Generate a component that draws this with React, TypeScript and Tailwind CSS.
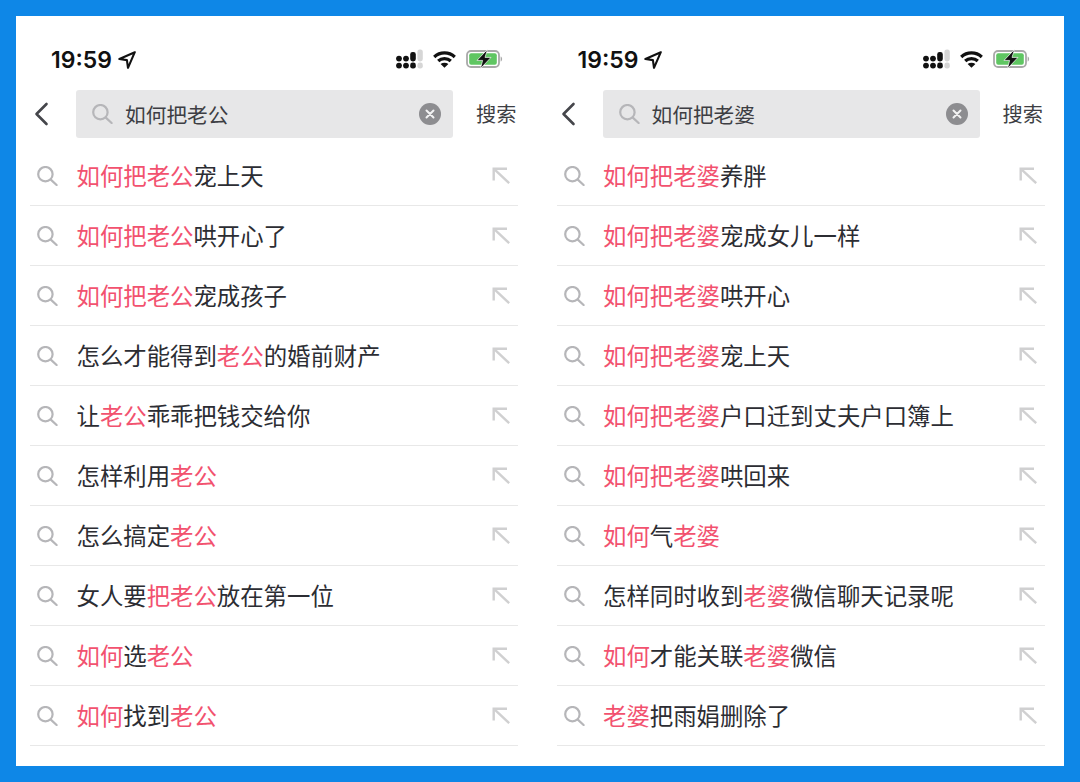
const cjk = "font-['Noto_Sans_CJK_SC','Noto_Sans_CJK_JP',sans-serif]";

type Seg = [string, boolean];
const R = (...parts: (string | [string])[]): Seg[] =>
  parts.map((p) => (typeof p === "string" ? [p, false] : [p[0], true]));

const left: Seg[][] = [
  R(["如何把老公"], "宠上天"),
  R(["如何把老公"], "哄开心了"),
  R(["如何把老公"], "宠成孩子"),
  R("怎么才能得到", ["老公"], "的婚前财产"),
  R("让", ["老公"], "乖乖把钱交给你"),
  R("怎样利用", ["老公"]),
  R("怎么搞定", ["老公"]),
  R("女人要", ["把老公"], "放在第一位"),
  R(["如何"], "选", ["老公"]),
  R(["如何"], "找到", ["老公"]),
];
const right: Seg[][] = [
  R(["如何把老婆"], "养胖"),
  R(["如何把老婆"], "宠成女儿一样"),
  R(["如何把老婆"], "哄开心"),
  R(["如何把老婆"], "宠上天"),
  R(["如何把老婆"], "户口迁到丈夫户口簿上"),
  R(["如何把老婆"], "哄回来"),
  R(["如何"], "气", ["老婆"]),
  R("怎样同时收到", ["老婆"], "微信聊天记录呢"),
  R(["如何"], "才能关联", ["老婆"], "微信"),
  R(["老婆"], "把雨娟删除了"),
];

function SearchIcon() {
  return (
    <svg width="21" height="20" viewBox="0 0 21 20" fill="none" stroke="#b6b6b9" strokeWidth="2.2" strokeLinecap="round">
      <circle cx="8.4" cy="8.2" r="7.2" />
      <path d="M13.8 13.6 L19.6 19" />
    </svg>
  );
}

function ArrowIcon() {
  return (
    <svg width="18" height="17" viewBox="0 0 18 17" fill="none" stroke="#d0d0d1" strokeWidth="2.4">
      <path d="M1.7 13.5 V1.7 H15" />
      <path d="M2.2 2.2 L17.2 16.2" />
    </svg>
  );
}

function StatusBar() {
  return (
    <div className="ml-[35px] flex h-[30px] w-[452px] items-center justify-between">
      <div className="flex items-center gap-[6px]">
        <span className="mt-[2px] font-['Inter',sans-serif] text-[23px] leading-[30px] font-semibold text-[#111]">19:59</span>
        <svg className="mt-[1px]" width="18" height="18" viewBox="0 0 18 18" fill="none" stroke="#111" strokeWidth="2.1" strokeLinejoin="round">
          <path d="M16.8 1.2 L1.4 8 L8.9 9.1 L10 16.8 Z" />
        </svg>
      </div>
      <div className="flex items-center gap-[10px]">
        <svg width="27" height="20" viewBox="0 0 27 20">
          <g fill="#111">
            <circle cx="3" cy="16.6" r="2.9" />
            <circle cx="3" cy="9.6" r="2.9" />
            <circle cx="10" cy="16.6" r="2.9" />
            <circle cx="10" cy="9.6" r="2.9" />
            <rect x="14.2" y="13.6" width="5.6" height="6" rx="2.4" />
            <rect x="14.2" y="3" width="5.6" height="9.4" rx="2.4" />
          </g>
          <rect x="21.4" y="13.6" width="5.4" height="6" rx="2.4" fill="#d6d6d6" />
          <rect x="21.4" y="0.4" width="5.4" height="12" rx="2.4" fill="#d6d6d6" />
        </svg>
        <svg width="23" height="17" viewBox="0 0 23 17" fill="none" stroke="#111" strokeWidth="3.2">
          <path d="M1.2 6 C7 0.6 16 0.6 21.8 6" />
          <path d="M5.2 10 C8.6 6.8 14.4 6.8 17.8 10" />
          <path d="M11.5 16.8 L7.6 13 C9.8 11.4 13.2 11.4 15.4 13 Z" fill="#111" stroke="none" />
        </svg>
        <svg width="37" height="20" viewBox="0 0 37 20">
          <rect x="1" y="2" width="32" height="16" rx="4" fill="none" stroke="#a9a9a9" strokeWidth="1.8" />
          <rect x="3.2" y="4.2" width="27.6" height="11.6" rx="2" fill="#5fc662" />
          <path d="M34.6 7.5 C36.6 8 36.6 12 34.6 12.5 Z" fill="#a9a9a9" />
          <path d="M21.5 0.4 L11 11.4 H16.6 L14.5 19.6 L25 8.4 H19 Z" fill="#111" stroke="#fff" strokeWidth="0.7" />
        </svg>
      </div>
    </div>
  );
}

function Phone({ query, rows, className }: { query: string; rows: Seg[][]; className: string }) {
  return (
    <div className={`flex flex-col pt-[28px] ${className}`}>
      <StatusBar />
      <div className="mt-[16px] flex h-[48px] items-center">
        <div className="flex w-[60px] justify-start pl-[18px]">
          <svg width="15" height="24" viewBox="0 0 15 24" fill="none" stroke="#45464b" strokeWidth="2.6" strokeLinecap="round" strokeLinejoin="round">
            <path d="M12.5 2 L2.5 12 L12.5 22" />
          </svg>
        </div>
        <div className="flex h-[48px] w-[377px] items-center rounded-[3px] bg-[#e7e7e8] pl-[16px] pr-[12px]">
          <SearchIcon />
          <span className="ml-[12px] flex-1 text-[20.7px] leading-none text-[#3d3e43]">{query}</span>
          <span className="flex h-[22px] w-[22px] items-center justify-center rounded-full bg-[#8d8d90]">
            <svg width="10" height="10" viewBox="0 0 10 10" fill="none" stroke="#f2f2f2" strokeWidth="2" strokeLinecap="round">
              <path d="M1.5 1.5 L8.5 8.5 M8.5 1.5 L1.5 8.5" />
            </svg>
          </span>
        </div>
        <span className="ml-[23px] text-[20.2px] leading-none text-[#3d3e43]">搜索</span>
      </div>
      <div className="mt-[8px] ml-[14px] w-[488px]">
        {rows.map((segs, i) => (
          <div key={i} className="flex h-[60px] items-center border-b border-[#e8e8e8] pl-[7px] pr-[8px]">
            <span className="flex w-[39.5px]">
              <SearchIcon />
            </span>
            <span className="flex-1 text-[23.4px] leading-none text-[#2c2d33]">
              {segs.map(([t, red], j) => (
                <span key={j} className={red ? "text-[#f2526f]" : undefined}>{t}</span>
              ))}
            </span>
            <span className="flex">
              <ArrowIcon />
            </span>
          </div>
        ))}
      </div>
    </div>
  );
}

export default function App() {
  return (
    <div className={`h-[782px] w-[1080px] overflow-hidden bg-[#0e87e7] p-4 ${cjk}`}>
      <div className="flex h-[750px] bg-white">
        <Phone query="如何把老公" rows={left} className="w-[526.5px]" />
        <Phone query="如何把老婆" rows={right} className="w-[521.5px]" />
      </div>
    </div>
  );
}
